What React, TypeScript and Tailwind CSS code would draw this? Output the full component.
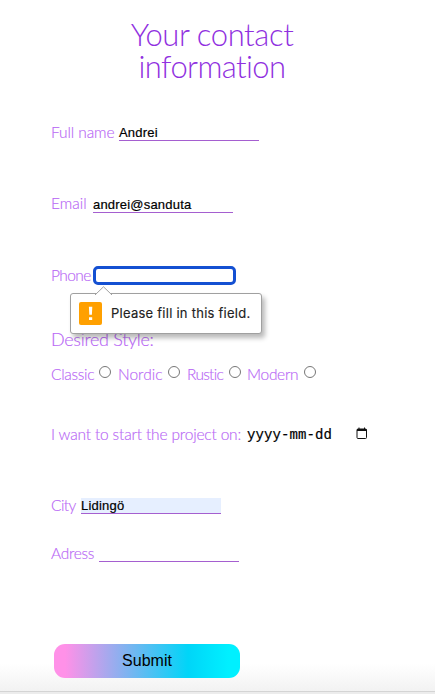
import type { ReactNode } from "react";

const labelFont = "font-['Lato','Josefin_Sans',sans-serif] font-light text-[#b866f5] whitespace-nowrap [-webkit-text-stroke:0.15px_#b866f5]";
const fieldFont = "font-['Liberation_Sans',Arial,sans-serif] text-[13px] text-black";

function Label({ width, className = "", children }: { width: string; className?: string; children: ReactNode }) {
  return <label className={`${labelFont} block shrink-0 text-[15.5px] ${width} ${className}`}>{children}</label>;
}

function Field({ value = "", filled = false }: { value?: string; filled?: boolean }) {
  return (
    <div
      className={`${fieldFont} h-4 w-[140px] shrink-0 border-b border-[#a55fd0] leading-[15px] tracking-[0.2px] [-webkit-text-stroke:0.2px_black] ${filled ? "bg-[#e6efff]" : ""}`}
    >
      {value}
    </div>
  );
}

function Radio() {
  return <span className="mb-[6px] block size-3 shrink-0 rounded-full border border-[#777] bg-white" />;
}

function ValidationBubble() {
  return (
    <div className="absolute left-[19px] top-[27px] z-10 flex h-[41px] w-[192px] items-center rounded-[3px] border border-[#a0a0a0] bg-white pl-2 shadow-[3px_4px_5px_rgba(0,0,0,0.28)]">
      <svg className="absolute -top-[8px] left-[24px]" width="18" height="9" viewBox="0 0 18 9">
        <path d="M0 9 L8.5 0.8 L17 9" fill="white" stroke="#a0a0a0" />
      </svg>
      <svg className="shrink-0" width="23" height="23" viewBox="0 0 23 23">
        <rect width="23" height="23" rx="2" fill="#ffa000" />
        <path d="M9.9 4.8h3.4l-.4 8h-2.6zM10 15.2h3.2v2.8H10z" fill="white" />
      </svg>
      <span className="ml-[9px] whitespace-nowrap font-['Inter',sans-serif] text-[13px] tracking-[0.25px] text-[#222] [-webkit-text-stroke:0.15px_#222]">
        Please fill in this field.
      </span>
    </div>
  );
}

export default function App() {
  return (
    <div className="flex h-[694px] w-[435px] flex-col overflow-hidden bg-white">
      <main className="flex h-[692px] flex-col border-b border-[#d4d4d4] bg-[linear-gradient(to_bottom,white_664px,#f2f2f2_691px)] pl-[51px]">
        <h1 className="mt-[18px] h-16 w-[322px] text-center font-['Lato','Josefin_Sans',sans-serif] text-[31px] font-light leading-8 text-[#9030e0]">
          <span className="block tracking-[-0.4px]">Your contact</span>
          <span className="block tracking-[-0.6px]">information</span>
        </h1>
        <form>
          <div className="mt-[39px] flex h-5 items-end">
            <Label width="w-[68px]" className="leading-[18px] tracking-[-0.1px]">Full name</Label>
            <Field value="Andrei" />
          </div>
          <div className="mt-[52px] flex h-5 items-end">
            <Label width="w-[42px]" className="leading-[19px]">Email</Label>
            <Field value="andrei@sanduta" />
          </div>
          <div className="relative mt-[53px] flex h-5 items-end">
            <Label width="w-[42px]" className="mb-px leading-5 tracking-[-0.6px]">Phone</Label>
            <div className="mb-px h-[19px] w-[143px] shrink-0 rounded-[5px] border-[3px] border-[#1450d2] bg-white" />
            <ValidationBubble />
          </div>
          <h2 className={`${labelFont} mt-[41px] h-6 text-[18px] leading-6 tracking-[-0.3px]`}>Desired Style:</h2>
          <div className="mt-[13px] flex h-5 items-end">
            <Label width="w-[48px]" className="leading-5 tracking-[-0.3px]">Classic</Label>
            <Radio />
            <Label width="w-[50px]" className="ml-[7px] leading-5">Nordic</Label>
            <Radio />
            <Label width="w-[42px]" className="ml-[7px] leading-5 tracking-[-0.7px]">Rustic</Label>
            <Radio />
            <Label width="w-[57px]" className="ml-[6px] leading-5 tracking-[-0.3px]">Modern</Label>
            <Radio />
          </div>
          <div className="mt-[40px] flex h-5 items-end">
            <Label width="w-[196px]" className="leading-5 tracking-[-0.17px]">I want to start the project on:</Label>
            <span className="w-[109px] whitespace-nowrap font-['Liberation_Mono',monospace] text-[14px] leading-[17px] tracking-[0.1px] text-black [-webkit-text-stroke:0.2px_black]">
              yyyy-mm-dd
            </span>
            <svg className="mb-1" width="12" height="13" viewBox="0 0 12 13" fill="none" stroke="#111">
              <rect x="1" y="2" width="9.5" height="9.5" rx="1" />
              <path d="M1 3h9.5" strokeWidth="2" />
              <path d="M3 0.5v2M8.5 0.5v2" />
            </svg>
          </div>
          <div className="mt-[50px] flex h-5 items-end">
            <Label width="w-[30px]" className="leading-[18px] tracking-[-0.6px]">City</Label>
            <Field value="Lidingö" filled />
          </div>
          <div className="mt-[28px] flex h-5 items-end">
            <Label width="w-[48px]" className="leading-[18px] tracking-[-0.3px]">Adress</Label>
            <Field />
          </div>
          <button
            type="button"
            className="ml-[3px] mt-[82px] block h-[34px] w-[186px] rounded-[11px] bg-[linear-gradient(to_right,#ff91e8_6%,#00d5f8_72%,#00f0ff_94%)] text-center font-['Liberation_Sans',Arial,sans-serif] text-[16px] leading-8 text-black"
          >
            Submit
          </button>
        </form>
      </main>
      <div className="h-[2px] bg-[#ececec]" />
    </div>
  );
}
